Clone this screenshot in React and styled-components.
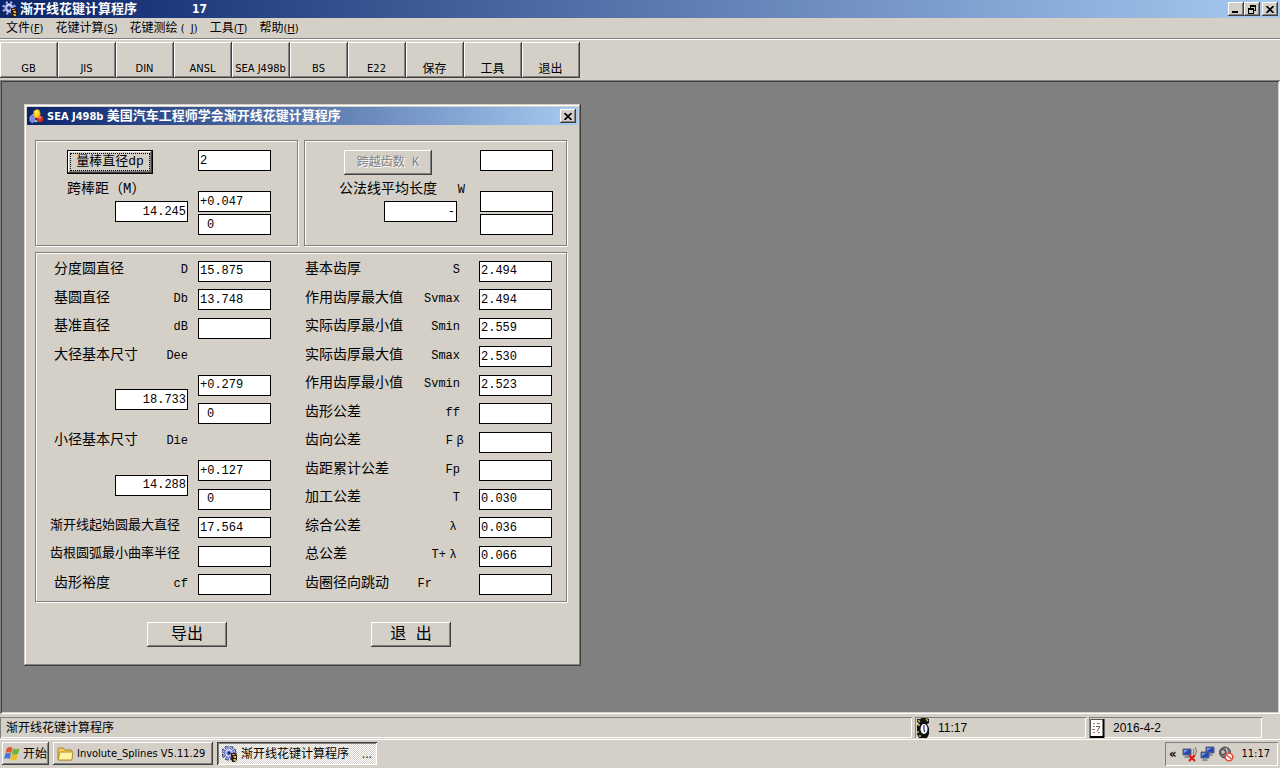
import React from 'react';
import styled, { createGlobalStyle, css } from 'styled-components';

const FACE = '#d4d0c8';
const UI = '"DejaVu Sans Condensed", "Noto Sans CJK SC", sans-serif';
const SONG = '"Liberation Mono", "Noto Sans CJK SC", monospace';

const Global = createGlobalStyle`
  *, *::before, *::after { box-sizing: border-box; }
  html, body { margin: 0; height: 100%; }
  body { background: ${FACE}; color: #000; font: 12px/14px ${UI}; }
  #root { height: 100%; }
  button, input { font: inherit; color: inherit; margin: 0; border-radius: 0; }
  button { padding: 0; }
  svg { flex: none; }
`;

const raised = css`
  border: 0;
  background: ${FACE};
  box-shadow: inset -1px -1px #404040, inset 1px 1px #fff, inset -2px -2px #808080;
`;
const sunken = css`
  box-shadow: inset 1px 1px #808080, inset -1px -1px #fff;
`;

const Screen = styled.div`
  display: flex;
  flex-direction: column;
  min-height: 100%;
`;

const TitleBar = styled.header`
  display: flex;
  align-items: center;
  height: 18px;
  padding: 0 2px;
  gap: 2px;
  background: linear-gradient(90deg, #0a246a, #a6caf0);
  color: #fff;
`;
const Title = styled.h1`
  margin: 0;
  flex: 1;
  font-size: 13px;
  line-height: 18px;
  font-weight: bold;
  white-space: pre;
  font-family: ${UI};
`;
const Count = styled.span`
  margin-left: 55px;
  font-size: 12px;
`;
const Latin = styled.span`
  font-size: 11px;
`;
const CaptionButtons = styled.div`
  display: flex;
`;
const CaptionButton = styled.button`
  ${raised}
  width: 16px;
  height: 14px;
  margin-left: ${(p) => (p.$apart ? 2 : 0)}px;
  display: grid;
  place-items: center;
  color: #000;
`;

const MenuBar = styled.nav`
  display: flex;
  height: 21px;
  border-bottom: 1px solid #808080;
`;
const MenuItem = styled.button`
  border: 0;
  background: none;
  padding: 0 6px;
  line-height: 20px;
  white-space: pre;
  u { text-underline-offset: 1px; }
`;
const Key = styled.span`
  font-size: 11px;
`;

const ToolBar = styled.div`
  display: flex;
  height: 41px;
  padding-top: 2px;
  border-top: 1px solid #fff;
`;
const ToolButton = styled.button`
  ${raised}
  width: 58px;
  height: 36px;
  padding: 18px 1px 0 0;
  font-size: ${(p) => (p.$latin ? 11 : 12)}px;
  line-height: 16px;
  white-space: nowrap;
`;

const Workspace = styled.main`
  flex: 1;
  padding: 24px;
  background: #808080;
  box-shadow: inset 1px 1px #808080, inset -1px -1px #fff, inset 2px 2px #404040, inset -2px -2px ${FACE};
`;

const Dialog = styled.section`
  width: 557px;
  padding: 3px;
  background: ${FACE};
  box-shadow: inset -1px -1px #404040, inset 1px 1px ${FACE}, inset -2px -2px #808080, inset 2px 2px #fff;
`;
const DialogBody = styled.form`
  display: flex;
  flex-direction: column;
  gap: 6px;
  padding: 15px 11px 16px 8px;
  font-family: ${SONG};
`;
const Pair = styled.div`
  display: grid;
  grid-template-columns: repeat(2, minmax(0, 1fr));
  gap: 6px;
`;
const Group = styled.div`
  border: 1px solid #808080;
  box-shadow: inset 1px 1px #fff, 1px 1px #fff;
`;
const Measure = styled(Group)`
  display: flex;
  gap: ${(p) => p.$gap}px;
  padding: ${(p) => p.$pad};
`;
const MeasureMain = styled.div`
  flex: 1;
  min-width: 0;
  display: flex;
  flex-direction: column;
  align-items: flex-start;
`;
const MeasureSide = styled.div`
  display: flex;
  flex-direction: column;
  gap: 2px;
  & > :first-child { margin-bottom: 18px; }
`;
const Field = styled.input`
  display: block;
  width: 73px;
  height: 21px;
  padding: 0 1px;
  border: 1px solid #000;
  background: #fff;
  text-align: ${(p) => p.$align || 'left'};
  text-indent: ${(p) => (p.$indent ? 7 : 0)}px;
  font: 12px/18px ${SONG};
  outline: none;
`;
const Caption = styled.label`
  display: flex;
  align-items: center;
  justify-content: space-between;
  height: 16px;
  width: ${(p) => p.$width};
  margin: 7px 0 4px;
  font-size: 14px;
  line-height: 16px;
  white-space: nowrap;
`;
const Symbol = styled.span`
  padding-top: 2px;
  font-size: 12px;
  white-space: pre;
`;
const Greek = styled.span`
  display: inline-block;
  width: 14px;
  text-align: center;
`;
const PressButton = styled.button`
  ${raised}
  width: ${(p) => p.$width || 80}px;
  height: 25px;
  font-size: ${(p) => p.$size || 16}px;
  line-height: 20px;
  white-space: pre;
  &:disabled { color: #808080; text-shadow: 1px 1px #fff; }
`;
const DefaultButton = styled(PressButton)`
  height: 24px;
  border: 1px solid #000;
  padding: 2px;
  span {
    display: block;
    border: 1px dotted #000;
    line-height: 16px;
  }
`;
const Indented = styled.div`
  margin-left: 5px;
  height: 24px;
`;
const End = styled.div`
  align-self: flex-end;
`;

const Results = styled(Group)`
  display: grid;
  grid-template-columns: 217px 247px;
  column-gap: 34px;
  padding: 4px 14px 2px 18px;
`;
const Sheet = styled.div`
  display: grid;
  grid-template-columns: 1fr 73px;
  grid-auto-rows: 1fr;
  column-gap: ${(p) => p.$gap}px;
  align-items: center;
  min-height: 342px;
`;
const RowLabel = styled.label`
  grid-column: 1;
  grid-row: ${(p) => p.$row};
  display: flex;
  justify-content: space-between;
  align-items: center;
  padding-bottom: 4px;
  margin-right: ${(p) => p.$end || 0}px;
  margin-left: ${(p) => (p.$long ? -4 : 0)}px;
  font-size: ${(p) => (p.$long ? 13 : 14)}px;
  line-height: 18px;
  white-space: nowrap;
`;
const Cell = styled.div`
  grid-column: 2;
  grid-row: ${(p) => p.$row};
`;
const MainCell = styled.div`
  grid-column: 1;
  grid-row: ${(p) => p.$row} / span 2;
  justify-self: end;
`;
const Footer = styled.div`
  display: flex;
  gap: 144px;
  padding: 14px 0 0 112px;
`;

const StatusBar = styled.footer`
  display: flex;
  gap: 3px;
  padding: 3px 18px 1px 0;
  height: 25px;
`;
const Panel = styled.div`
  ${sunken}
  display: flex;
  align-items: center;
  gap: 8px;
  flex: ${(p) => p.$flex};
  padding: 0 ${(p) => p.$pad}px;
`;
const Digits = styled.span`
  font-family: "Liberation Sans", sans-serif;
`;

const TaskBar = styled.footer`
  display: flex;
  align-items: center;
  gap: 4px;
  height: 29px;
  padding: 1px 2px 2px;
  border-top: 1px solid #fff;
`;
const TaskButton = styled.button`
  ${raised}
  display: flex;
  align-items: center;
  gap: 3px;
  height: 23px;
  width: ${(p) => p.$width}px;
  padding: 0 ${(p) => p.$pad}px;
  white-space: nowrap;
  font-size: ${(p) => (p.$latin ? 11 : 12)}px;
  ${(p) => p.$active && css`
    background: repeating-conic-gradient(#fff 0 25%, ${FACE} 0 50%) 0 0 / 2px 2px;
    box-shadow: inset 1px 1px #404040, inset -1px -1px #fff, inset 2px 2px #808080;
  `}
`;
const Ellipsis = styled.span`
  margin-left: auto;
`;
const Tray = styled.div`
  ${sunken}
  display: flex;
  align-items: center;
  gap: 2px;
  height: 24px;
  margin-left: auto;
  padding: 0 8px 0 4px;
  font-size: 11px;
  svg + span { margin-left: 5px; }
`;
const Chevron = styled.span`
  font-size: 13px;
  font-weight: bold;
  margin-right: 4px;
`;

function GearIcon() {
  return (
    <svg width="16" height="16" viewBox="0 0 16 16" aria-hidden="true">
      <circle cx="7" cy="7" r="5.5" fill="none" stroke="#15205e" strokeWidth="4" strokeDasharray="3 1.320" />
      <circle cx="7" cy="7" r="5.4" fill="none" stroke="#aab4f0" strokeWidth="2.800" strokeDasharray="1.900 2.340" strokeDashoffset="-.5" />
      <circle cx="7" cy="7" r="4.500" fill="#a9b4ee" stroke="#6a76c8" />
      <path d="M4 5l3-2 3 2M4 9l3 2" stroke="#eef" fill="none" />
      <circle cx="7" cy="7" r="1.700" fill="#1b2870" />
      <path d="M9 7h4l2 2v5l-2 2h-3l-1-4z" fill="#2a1c10" />
      <path d="M10 8h3v1h-3zM11 10h3v2h-2zM11 13h3v2h-2z" fill="#e0a848" />
    </svg>
  );
}
function BlocksIcon() {
  return (
    <svg width="16" height="16" viewBox="0 0 17 16" aria-hidden="true">
      <path d="M1 9l3-3 2 2v6l-3 1-2-2z" fill="#7c83e0" stroke="#b9c0ff" strokeWidth=".7" />
      <path d="M8 9l3-2 4 2v4l-4 2-3-2z" fill="#d3342a" stroke="#7d1611" strokeWidth=".7" />
      <path d="M8 9l3-1 3 1-3 2z" fill="#f08a78" />
      <path d="M5 3l3-2 3 1 1 4-2 3-3 1-2-3z" fill="#ffd619" stroke="#e09b00" strokeWidth=".7" />
      <path d="M7 3l2-1v2l-2 2z" fill="#fff6a0" />
      <path d="M6 13l2-1 1 2-2 1z" fill="#8ed9e8" />
    </svg>
  );
}
function CloseIcon() {
  return <svg width="8" height="7" viewBox="0 0 8 7" aria-hidden="true"><path d="M.5 0l7 7M7.500 0l-7 7" stroke="#000" strokeWidth="1.6" /></svg>;
}
function MinimizeIcon() {
  return <svg width="8" height="8" viewBox="0 0 8 8" aria-hidden="true"><path d="M0 6h6v2H0z" /></svg>;
}
function RestoreIcon() {
  return (
    <svg width="9" height="9" viewBox="0 0 9 9" aria-hidden="true">
      <path d="M2 0h6v6H6V5h1V2H3v1H2z" />
      <path d="M0 3h6v6H0zM1 5v3h4V5z" fillRule="evenodd" />
    </svg>
  );
}
function FlagIcon() {
  return (
    <svg width="16" height="15" viewBox="0 0 16 15" aria-hidden="true">
      <path d="M3 2q2.500-2 5.500 0L7.300 7Q4.500 5.500 1.500 7z" fill="#e2542c" />
      <path d="M9.200 2.500q3 1.500 6.300 0L14 8q-3 1.300-6 0z" fill="#72b232" />
      <path d="M1.300 7.700q3-1.500 5.700 0L5.700 13Q3 11.500 0 13z" fill="#4478d4" />
      <path d="M7.700 8.600q3 1.500 6 0L12.300 14q-3 1-6-.5z" fill="#f2bd27" />
    </svg>
  );
}
function FolderIcon() {
  return (
    <svg width="17" height="15" viewBox="0 0 17 15" aria-hidden="true">
      <path d="M1 3q0-1 1-1h4l2 2h6q1 0 1 1v8q0 1-1 1H2q-1 0-1-1z" fill="#f3cf55" stroke="#a9832a" />
      <path d="M1.500 13l1-6q.2-1 1-1h11.500q1 0 .8 1L15 13q-.3 1-1 1H2.500q-1 0-1-1z" fill="#fff3a4" stroke="#b68c2c" />
    </svg>
  );
}
function ClockIcon() {
  return (
    <svg width="14" height="20" viewBox="0 0 14 20" aria-hidden="true">
      <path d="M1 1h3l2-1h4l3 1v4l-2 1 2 4v6l-2 4H3l-2-4V8l2-3-2-1z" fill="#111" />
      <path d="M2 2l2 2M10 1l2 2M2 7h2M1 14h2M3 18h2" stroke="#c8c84a" strokeWidth="1.5" />
      <ellipse cx="8" cy="11" rx="3.500" ry="5" fill="#fff" />
      <path d="M8 7v5l1 2" stroke="#26348c" strokeWidth="1.200" fill="none" />
    </svg>
  );
}
function CalendarIcon() {
  return (
    <svg width="16" height="20" viewBox="0 0 16 20" aria-hidden="true">
      <path d="M1 1h14v18H1z" fill="#fff" />
      <path d="M14.500 1v18H1" fill="none" stroke="#000" strokeWidth="2" />
      <path d="M1.500 18V1.500H14" fill="none" stroke="#555" />
      <path d="M4 5.500h2M8 5.500h3M4 8.500h2M3 11.500h3M4 14.500h2M9 14.500h2" stroke="#b06868" />
      <path d="M7 8.500h4l-3 5" stroke="#666" fill="none" />
    </svg>
  );
}
function Monitor({ x, y }) {
  return (
    <g transform={`translate(${x} ${y})`}>
      <path d="M0 0h8v6H0z" fill="#2747b5" stroke="#5a6378" />
      <path d="M1 1h4L1 4z" fill="#7fa2ee" />
      <path d="M2 7h4l1 2H1z" fill="#8890a0" />
    </g>
  );
}
function WirelessOffIcon() {
  return (
    <svg width="16" height="16" viewBox="0 0 16 16" aria-hidden="true">
      <Monitor x={1} y={3} />
      <path d="M11 3q2 2 0 5M13 1q3 4 0 8" fill="none" stroke="#777" />
      <path d="M7 9l6 6M13 9l-6 6" stroke="#e01818" strokeWidth="2.200" />
    </svg>
  );
}
function NetworkIcon() {
  return (
    <svg width="16" height="16" viewBox="0 0 16 16" aria-hidden="true">
      <Monitor x={6} y={1} />
      <Monitor x={1} y={6} />
    </svg>
  );
}
function MutedIcon() {
  return (
    <svg width="16" height="16" viewBox="0 0 16 16" aria-hidden="true">
      <circle cx="7" cy="6.500" r="5.500" fill="#777" stroke="#444" />
      <circle cx="5" cy="6" r="2.500" fill="#bbb" stroke="#444" />
      <path d="M8 2q3 4 0 9" stroke="#ddd" fill="none" />
      <circle cx="11" cy="11" r="3.800" fill="#fff" stroke="#dd4a36" strokeWidth="1.600" />
      <path d="M8.500 9l5 4" stroke="#dd4a36" strokeWidth="1.600" />
    </svg>
  );
}

const menus = [
  ['文件', '(', 'F'],
  ['花键计算', '(', 'S'],
  ['花键测绘', ' (  ', 'J'],
  ['工具', '(', 'T'],
  ['帮助', '(', 'H'],
];
const tools = ['GB', 'JIS', 'DIN', 'ANSL', 'SEA J498b', 'BS', 'E22', '保存', '工具', '退出'];

const leftRows = [
  { row: 1, id: 'd', text: '分度圆直径', symbol: 'D', value: '15.875' },
  { row: 2, id: 'db', text: '基圆直径', symbol: 'Db', value: '13.748' },
  { row: 3, id: 'dref', text: '基准直径', symbol: 'dB', value: '' },
  { row: 4, id: 'dee', text: '大径基本尺寸', symbol: 'Dee', main: '18.733', upper: '+0.279' },
  { row: 7, id: 'die', text: '小径基本尺寸', symbol: 'Die', main: '14.288', upper: '+0.127' },
  { row: 10, id: 'form', text: '渐开线起始圆最大直径', long: true, value: '17.564' },
  { row: 11, id: 'root-radius', text: '齿根圆弧最小曲率半径', long: true, value: '' },
  { row: 12, id: 'cf', text: '齿形裕度', symbol: 'cf', value: '' },
];
const rightRows = [
  { text: '基本齿厚', symbol: 'S', value: '2.494' },
  { text: '作用齿厚最大值', symbol: 'Svmax', value: '2.494' },
  { text: '实际齿厚最小值', symbol: 'Smin', value: '2.559' },
  { text: '实际齿厚最大值', symbol: 'Smax', value: '2.530' },
  { text: '作用齿厚最小值', symbol: 'Svmin', value: '2.523' },
  { text: '齿形公差', symbol: 'ff', value: '' },
  { text: '齿向公差', symbol: 'F', greek: 'β', end: -7, value: '' },
  { text: '齿距累计公差', symbol: 'Fp', value: '' },
  { text: '加工公差', symbol: 'T', value: '0.030' },
  { text: '综合公差', symbol: '', greek: 'λ', value: '0.036' },
  { text: '总公差', symbol: 'T+', greek: 'λ', value: '0.066' },
  { text: '齿圈径向跳动', symbol: 'Fr', end: 28, value: '' },
];

function LeftRow({ row, id, text, symbol, long, value, main, upper }) {
  return (
    <>
      <RowLabel htmlFor={id} $row={row} $long={long}>
        {text}
        {symbol && <Symbol>{symbol}</Symbol>}
      </RowLabel>
      {main ? (
        <>
          <MainCell $row={row + 1}><Field id={id} defaultValue={main} $align="right" /></MainCell>
          <Cell $row={row + 1}><Field aria-label={`${text} 上偏差`} defaultValue={upper} /></Cell>
          <Cell $row={row + 2}><Field aria-label={`${text} 下偏差`} defaultValue="0" $indent /></Cell>
        </>
      ) : (
        <Cell $row={row}><Field id={id} defaultValue={value} /></Cell>
      )}
    </>
  );
}

function RightRow({ row, text, symbol, greek, end, value }) {
  const id = `tolerance-${row}`;
  return (
    <>
      <RowLabel htmlFor={id} $row={row} $end={end}>
        {text}
        <Symbol>{symbol}{greek && <Greek>{greek}</Greek>}</Symbol>
      </RowLabel>
      <Cell $row={row}><Field id={id} defaultValue={value} /></Cell>
    </>
  );
}

function SplineDialog() {
  return (
    <Dialog role="dialog" aria-labelledby="dialog-title">
      <TitleBar>
        <BlocksIcon />
        <Title as="h2" id="dialog-title"><Latin>SEA J498b </Latin>美国汽车工程师学会渐开线花键计算程序</Title>
        <CaptionButton type="button" aria-label="关闭"><CloseIcon /></CaptionButton>
      </TitleBar>
      <DialogBody onSubmit={(e) => e.preventDefault()}>
        <Pair>
          <Measure $gap={10} $pad="9px 26px 10px 31px">
            <MeasureMain>
              <DefaultButton type="button" $width={86} $size={13}><span>量棒直径dp</span></DefaultButton>
              <Caption htmlFor="pin-distance">跨棒距（M）</Caption>
              <End><Field id="pin-distance" defaultValue="14.245" $align="right" /></End>
            </MeasureMain>
            <MeasureSide>
              <Field aria-label="量棒直径dp" defaultValue="2" />
              <Field aria-label="跨棒距 上偏差" defaultValue="+0.047" />
              <Field aria-label="跨棒距 下偏差" defaultValue="0" $indent />
            </MeasureSide>
          </Measure>
          <Measure $gap={23} $pad="9px 13px 10px 34px">
            <MeasureMain>
              <Indented>
                <PressButton type="button" disabled $width={88} $size={12}>跨越齿数 K</PressButton>
              </Indented>
              <Caption htmlFor="span-length" $width="126px">公法线平均长度<Symbol>W</Symbol></Caption>
              <End><Field id="span-length" defaultValue="-" $align="right" /></End>
            </MeasureMain>
            <MeasureSide>
              <Field aria-label="跨越齿数 K" />
              <Field aria-label="公法线 上偏差" />
              <Field aria-label="公法线 下偏差" />
            </MeasureSide>
          </Measure>
        </Pair>
        <Results>
          <Sheet $gap={10}>
            {leftRows.map((r) => <LeftRow key={r.id} {...r} />)}
          </Sheet>
          <Sheet $gap={19}>
            {rightRows.map((r, i) => <RightRow key={r.text} row={i + 1} {...r} />)}
          </Sheet>
        </Results>
        <Footer>
          <PressButton type="button">导出</PressButton>
          <PressButton type="button">退 出</PressButton>
        </Footer>
      </DialogBody>
    </Dialog>
  );
}

export default function App() {
  return (
    <Screen>
      <Global />
      <TitleBar>
        <GearIcon />
        <Title>渐开线花键计算程序<Count>17</Count></Title>
        <CaptionButtons>
          <CaptionButton aria-label="最小化"><MinimizeIcon /></CaptionButton>
          <CaptionButton aria-label="还原"><RestoreIcon /></CaptionButton>
          <CaptionButton aria-label="关闭" $apart><CloseIcon /></CaptionButton>
        </CaptionButtons>
      </TitleBar>
      <MenuBar>
        {menus.map(([name, open, key]) => (
          <MenuItem key={name}>{name}<Key>{open}<u>{key}</u>)</Key></MenuItem>
        ))}
      </MenuBar>
      <ToolBar>
        {tools.map((t) => <ToolButton key={t} $latin={/^[A-Z]/.test(t)}>{t}</ToolButton>)}
      </ToolBar>
      <Workspace>
        <SplineDialog />
      </Workspace>
      <StatusBar>
        <Panel $flex="1" $pad={6}>渐开线花键计算程序</Panel>
        <Panel $flex="0 0 171px" $pad={1}><ClockIcon /><Digits>11:17</Digits></Panel>
        <Panel $flex="0 0 173px" $pad={0}><CalendarIcon /><Digits>2016-4-2</Digits></Panel>
      </StatusBar>
      <TaskBar>
        <TaskButton $width={47} $pad={2}><FlagIcon />开始</TaskButton>
        <TaskButton $width={160} $pad={4} $latin><FolderIcon />Involute_Splines V5.11.29</TaskButton>
        <TaskButton $width={160} $pad={5} $active><GearIcon />渐开线花键计算程序<Ellipsis>...</Ellipsis></TaskButton>
        <Tray>
          <Chevron>«</Chevron>
          <WirelessOffIcon />
          <NetworkIcon />
          <MutedIcon />
          <span>11:17</span>
        </Tray>
      </TaskBar>
    </Screen>
  );
}
